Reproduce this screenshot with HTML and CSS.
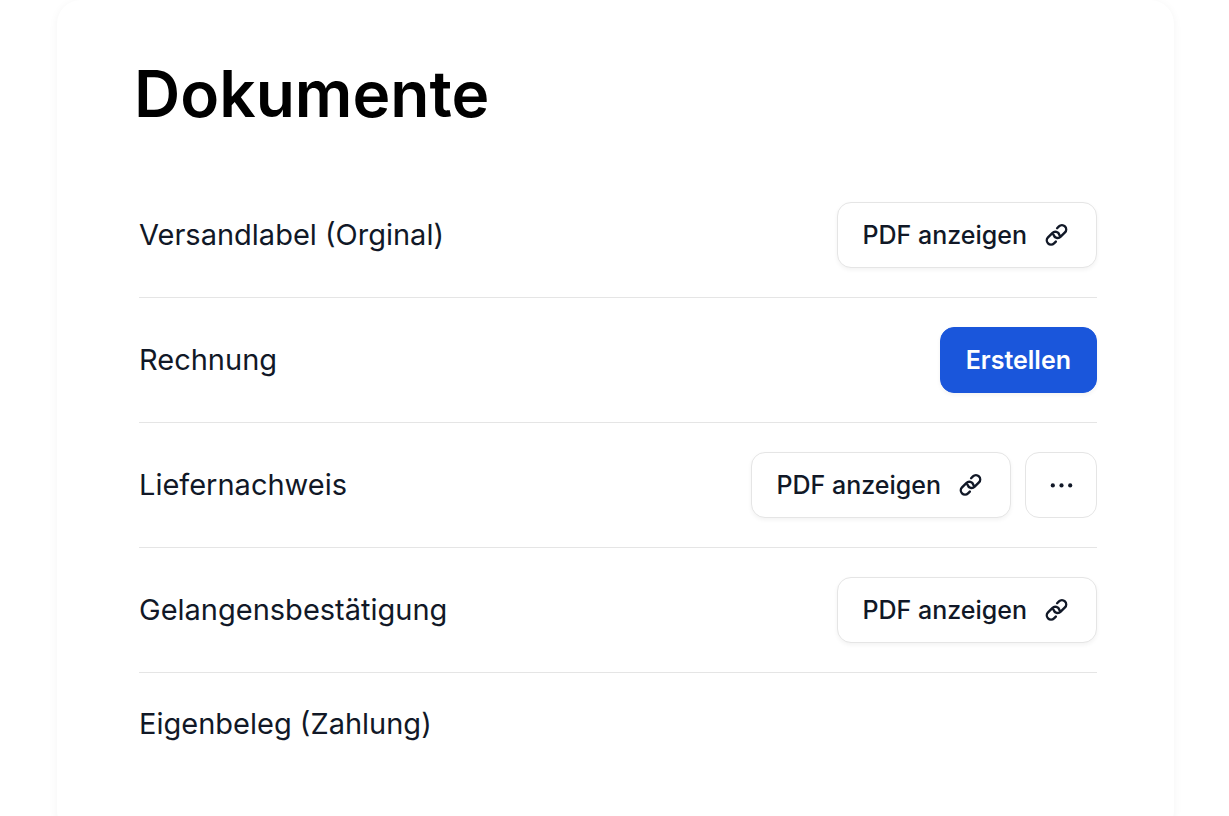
FILE: index.html
```html
<!DOCTYPE html>
<html lang="de">
<head>
  <meta charset="UTF-8">
  <meta name="viewport" content="width=device-width, initial-scale=1.0">
  <title>Dokumente</title>
  <link rel="stylesheet" href="styles.css">
</head>
<body>

<!-- shared icon -->
<svg class="sprite" aria-hidden="true">
  <symbol id="icon-link" viewBox="-2.5 -2 24 24">
    <path stroke-linecap="round" stroke-linejoin="round" d="M11.9 9.5a3.519 3.519 0 0 0-5.862-1.538l-3.554 3.554a3.518 3.518 0 0 0 4.975 4.975l1.5-1.5M7.075 9.475a3.518 3.518 0 0 0 5.862 1.538l3.554-3.554a3.518 3.518 0 0 0-4.975-4.975l-1.5 1.5"/>
  </symbol>
</svg>

<main class="card">
  <h1>Dokumente</h1>
  <ul class="documents">
    <li>
      <span>Versandlabel (Orginal)</span>
      <div class="actions">
        <button type="button" class="btn">PDF anzeigen <svg class="icon" aria-hidden="true"><use href="#icon-link"/></svg></button>
      </div>
    </li>
    <li>
      <span>Rechnung</span>
      <div class="actions">
        <button type="button" class="btn btn-primary">Erstellen</button>
      </div>
    </li>
    <li>
      <span>Liefernachweis</span>
      <div class="actions">
        <button type="button" class="btn">PDF anzeigen <svg class="icon" aria-hidden="true"><use href="#icon-link"/></svg></button>
        <button type="button" class="btn btn-more" aria-label="Mehr">
          <svg class="dots" viewBox="0 0 24 24" aria-hidden="true">
            <circle cx="3.8" cy="12.4" r="2.1"/>
            <circle cx="12.5" cy="12.4" r="2.1"/>
            <circle cx="21.2" cy="12.4" r="2.1"/>
          </svg>
        </button>
      </div>
    </li>
    <li>
      <span>Gelangensbestätigung</span>
      <div class="actions">
        <button type="button" class="btn">PDF anzeigen <svg class="icon" aria-hidden="true"><use href="#icon-link"/></svg></button>
      </div>
    </li>
    <li>
      <span>Eigenbeleg (Zahlung)</span>
    </li>
  </ul>
</main>

</body>
</html>
```
FILE: styles.css
```css
* {
  box-sizing: border-box;
}
body {
  margin: 0;
  font-family: Inter, sans-serif;
  background-color: #ffffff;
  color: #111827;
}
.sprite {
  display: none;
}
.card {
  min-height: 100vh;
  margin: 0 55px 0 57px;
  padding: 54px 77px 60px;
  background: #ffffff;
  border-radius: 24px;
  box-shadow: 0 2px 10px rgba(0, 0, 0, 0.05);
}
h1 {
  margin: 0 0 39px;
  color: #000000;
  font-size: 64px;
  font-weight: 600;
  line-height: 80px;
}
.documents {
  list-style: none;
  margin: 0;
  padding: 0 0 0 5px;
}
.documents li {
  display: flex;
  justify-content: space-between;
  align-items: center;
  padding: 29px 0;
  font-size: 29px;
  line-height: 44px;
}
.documents li + li {
  border-top: 1px solid #e5e5e5;
}
.actions {
  display: flex;
  gap: 14px;
}
.btn {
  display: flex;
  align-items: center;
  gap: 15px;
  height: 66px;
  padding: 0 25px;
  background: #ffffff;
  color: #111827;
  border: 1px solid #e5e5e5;
  border-radius: 14px;
  box-shadow: 0 2px 4px rgba(0, 0, 0, 0.05);
  font-family: inherit;
  font-size: 25px;
  font-weight: 500;
  cursor: pointer;
}
.btn:hover {
  background: #f9fafb;
}
.btn-primary {
  background: #1a56db;
  border-color: #1a56db;
  color: #ffffff;
  font-weight: 600;
}
.btn-primary:hover {
  background: #1e429f;
}
.btn-more {
  width: 72px;
  justify-content: center;
  padding: 0;
  box-shadow: none;
}
.icon {
  width: 29px;
  height: 29px;
  fill: none;
  stroke: currentColor;
  stroke-width: 2;
}
.dots {
  width: 24px;
  height: 24px;
  fill: currentColor;
}
```
